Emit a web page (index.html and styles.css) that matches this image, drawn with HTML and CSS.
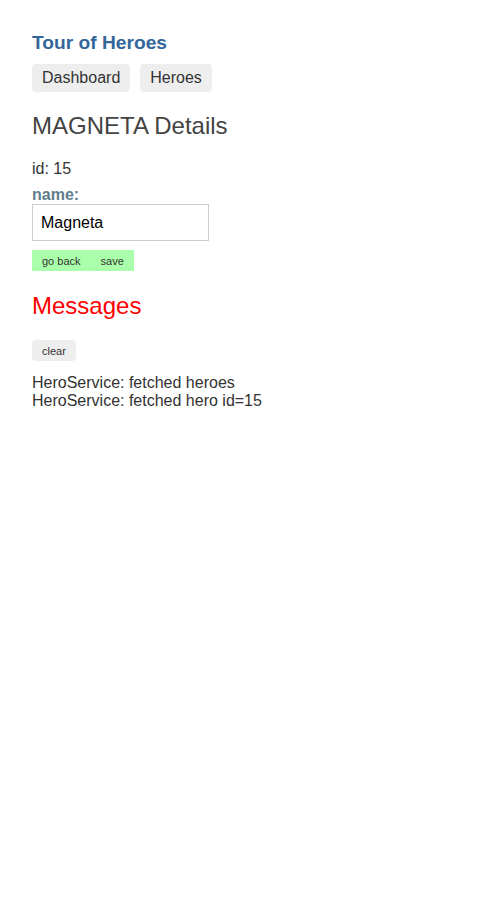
FILE: index.html
```html
<!DOCTYPE html>
<html>
<head>
<meta charset="utf-8">
<link rel="stylesheet" href="styles.css">
</head>
<body>
<h1 class="title">Tour of Heroes</h1>
<nav class="nav">
  <a class="nav-link">Dashboard</a>
  <a class="nav-link">Heroes</a>
</nav>
<div class="detail">
  <h2 class="detail-title">MAGNETA Details</h2>
  <div class="field">id: 15</div>
  <div class="field">
    <label class="name-label">name:</label>
    <input class="name-input" type="text" value="Magneta">
  </div>
  <div class="actions">
    <button class="action">go back</button><button class="action">save</button>
  </div>
</div>
<div class="messages">
  <h2 class="messages-title">Messages</h2>
  <button class="clear">clear</button>
  <div class="msg">HeroService: fetched heroes</div>
  <div class="msg">HeroService: fetched hero id=15</div>
</div>
</body>
</html>
```
FILE: styles.css
```css
body {
  margin: 32px;
  font-family: "Liberation Sans", Arial, sans-serif;
  font-size: 16px;
  color: #333;
}
.title {
  color: #336699;
  font-size: 19.2px;
  font-weight: bold;
  margin: 0;
}
.nav {
  margin-top: 10px;
  display: flex;
  gap: 10px;
}
.nav-link {
  display: inline-block;
  padding: 5px 10px;
  background: #eee;
  border-radius: 4px;
  color: #333;
}
.detail-title {
  font-size: 24px;
  font-weight: normal;
  color: #444;
  margin: 20px 0 20px;
}
.field {
  margin-bottom: 8px;
}
.name-label {
  display: block;
  color: #607d8b;
  font-weight: bold;
}
.name-input {
  box-sizing: border-box;
  width: 177px;
  height: 37px;
  font-size: 16px;
  font-family: "Liberation Sans", Arial, sans-serif;
  padding: 0 0 0 8px;
  border: 1px solid #ccc;
  color: #000;
  margin: 0;
  display: block;
}
.actions {
  margin-top: 9px;
  display: flex;
}
.action {
  background: #aaffaa;
  border: none;
  font-family: "Liberation Sans", Arial, sans-serif;
  font-size: 11px;
  color: #333;
  padding: 5px 10px;
  height: 21px;
  margin: 0;
}
.messages-title {
  color: red;
  font-size: 24px;
  font-weight: normal;
  margin: 21px 0 20px;
}
.clear {
  background: #eee;
  border: none;
  border-radius: 4px;
  font-family: "Liberation Sans", Arial, sans-serif;
  font-size: 11px;
  color: #333;
  padding: 5px 10px;
  height: 21px;
  margin: 0 0 13px;
}
.msg {
  line-height: 18px;
}
```
